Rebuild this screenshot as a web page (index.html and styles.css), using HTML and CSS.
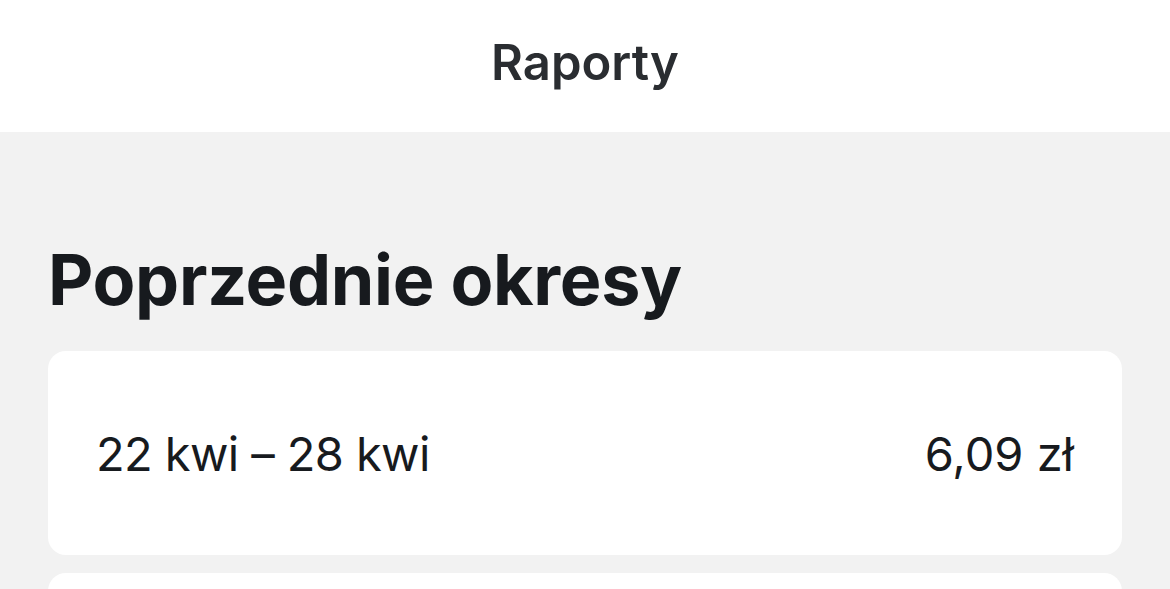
FILE: index.html
```html
<!DOCTYPE html>
<html lang="pl">
<head>
<meta charset="utf-8">
<title>Raporty</title>
<link rel="stylesheet" href="styles.css">
</head>
<body>
<header class="topbar"><h1 class="topbar-title">Raporty</h1></header>
<main class="content">
  <h2 class="section-title">Poprzednie okresy</h2>
  <div class="period-card">
    <span class="period-range">22 kwi – 28 kwi</span>
    <span class="period-amount">6,09 zł</span>
  </div>
  <div class="period-card"></div>
</main>
</body>
</html>
```
FILE: styles.css
```css
html, body {
  margin: 0;
  padding: 0;
}
body {
  background: #f2f2f2;
  font-family: Inter, "Noto Sans", sans-serif;
  color: #171a1e;
  overflow: hidden;
}
.topbar {
  height: 132px;
  box-sizing: border-box;
  padding-bottom: 7px;
  background: #ffffff;
  display: flex;
  align-items: center;
  justify-content: center;
}
.topbar-title {
  margin: 0;
  font-size: 49px;
  font-weight: 600;
  color: #2a2d31;
}
.content {
  padding: 0 48px;
}
.section-title {
  margin: 0;
  padding-top: 102px;
  height: 219px;
  box-sizing: border-box;
  font-size: 70px;
  font-weight: 700;
  line-height: 1.3;
  letter-spacing: -0.3px;
}
.period-card {
  background: #ffffff;
  border-radius: 18px;
  height: 204px;
  margin-bottom: 18px;
  padding: 0 48px;
  display: flex;
  align-items: center;
  justify-content: space-between;
  font-size: 47px;
}
.period-range {
  letter-spacing: -0.6px;
}
```
